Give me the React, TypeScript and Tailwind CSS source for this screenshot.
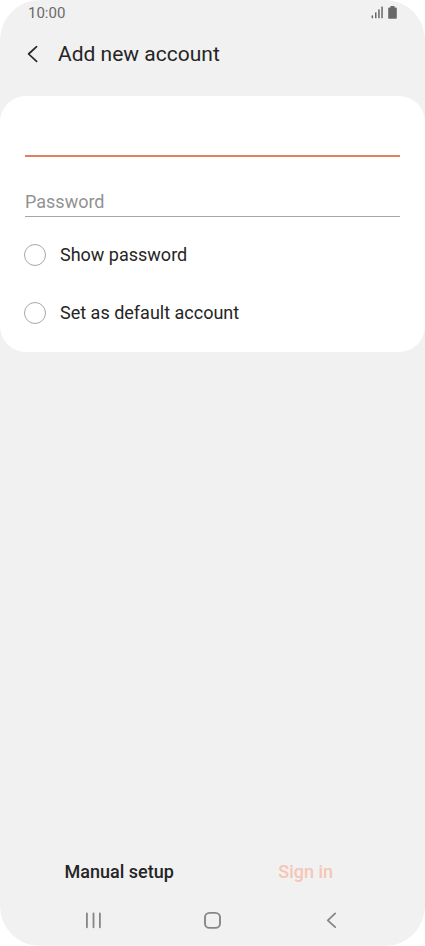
import { useState } from 'react';

interface CheckRowProps {
  label: string;
  checked: boolean;
  onChange: (checked: boolean) => void;
}

function CheckRow({ label, checked, onChange }: CheckRowProps) {
  return (
    <label className="flex h-[58px] items-center gap-3.5 text-lg text-[#252525]">
      <input
        type="checkbox"
        checked={checked}
        onChange={(e) => onChange(e.target.checked)}
        className="h-[22px] w-[22px] shrink-0 appearance-none rounded-full border border-[#a8a8a8] bg-white checked:border-[#e0754f] checked:bg-[#e0754f]"
      />
      {label}
    </label>
  );
}

function StatusBar() {
  return (
    <div className="flex h-[26px] items-center justify-between px-7 text-[15px] text-[#6a6a6a]">
      <span>10:00</span>
      <div className="flex items-center gap-1">
        <svg width="13" height="14" viewBox="0 0 13 14" fill="#686868" aria-hidden="true">
          <rect x="0.6" y="9.4" width="1.5" height="2.8" />
          <rect x="4" y="6.4" width="1.5" height="5.8" />
          <rect x="7.2" y="3.4" width="1.5" height="8.8" />
          <rect x="10.3" y="0.6" width="1.5" height="11.6" />
        </svg>
        <svg width="9" height="14" viewBox="0 0 9 14" fill="#686868" aria-hidden="true">
          <path d="M2.5 0h4v1.4H8a.8.8 0 0 1 .8.8V12a.8.8 0 0 1-.8.8H1a.8.8 0 0 1-.8-.8V2.2a.8.8 0 0 1 .8-.8h1.5z" />
        </svg>
      </div>
    </div>
  );
}

function NavBar() {
  return (
    <nav className="grid h-[52px] grid-cols-3 px-[34px] text-[#868686]">
      <button type="button" aria-label="Recent apps" className="flex items-center justify-center">
        <svg width="17" height="18" viewBox="0 0 17 18" fill="none" stroke="currentColor" strokeWidth="1.8" strokeLinecap="round">
          <path d="M1.9 2.3v14M8.5 2.3v14M14.9 2.3v14" />
        </svg>
      </button>
      <button type="button" aria-label="Home" className="flex items-center justify-center">
        <svg width="17" height="18" viewBox="0 0 17 18" fill="none" stroke="currentColor" strokeWidth="1.9">
          <rect x="1" y="1.9" width="15" height="15" rx="4.5" />
        </svg>
      </button>
      <button type="button" aria-label="Back" className="flex items-center justify-center">
        <svg width="17" height="18" viewBox="0 0 17 18" fill="none" stroke="currentColor" strokeWidth="1.8" strokeLinecap="round" strokeLinejoin="round">
          <path d="M12.2 2.4 4.8 9.3l7.4 6.9" />
        </svg>
      </button>
    </nav>
  );
}

export default function App() {
  const [email, setEmail] = useState('');
  const [password, setPassword] = useState('');
  const [showPassword, setShowPassword] = useState(false);
  const [isDefault, setIsDefault] = useState(false);

  return (
    <div className="min-h-screen bg-white font-[Roboto,sans-serif]">
      <div className="flex min-h-screen flex-col rounded-[40px] bg-[#f1f1f1]">
        <StatusBar />

        <header className="flex h-[58px] items-center gap-3.5 px-6">
          <button type="button" aria-label="Go back" className="text-[#252525]">
            <svg width="20" height="20" viewBox="0 0 20 20" fill="none" stroke="currentColor" strokeWidth="1.7" strokeLinecap="round" strokeLinejoin="round">
              <path d="M12.6 1.7 4.6 9l8 7.4" />
            </svg>
          </button>
          <h1 className="text-[21px] text-[#252525]">Add new account</h1>
        </header>

        <main className="mt-3 flex flex-col rounded-[26px] bg-white px-6 pt-7 pb-2.5">
          <input
            type="email"
            aria-label="Email address"
            value={email}
            onChange={(e) => setEmail(e.target.value)}
            className="mx-px h-[33px] border-b-2 border-[#e0805c] text-lg text-[#252525] outline-none"
          />
          <input
            type={showPassword ? 'text' : 'password'}
            aria-label="Password"
            placeholder="Password"
            value={password}
            onChange={(e) => setPassword(e.target.value)}
            className="mx-px mt-[30px] mb-[9px] h-[30px] border-b border-[#a6a6a6] text-lg text-[#252525] outline-none placeholder:text-[#929292]"
          />
          <CheckRow label="Show password" checked={showPassword} onChange={setShowPassword} />
          <CheckRow label="Set as default account" checked={isDefault} onChange={setIsDefault} />
        </main>

        <footer className="mt-auto">
          <div className="grid h-11 grid-cols-2 px-[26px] text-lg font-medium">
            <button type="button" className="text-[#252525]">Manual setup</button>
            <button type="button" disabled className="text-[#f6c5b5]">Sign in</button>
          </div>
          <NavBar />
        </footer>
      </div>
    </div>
  );
}
